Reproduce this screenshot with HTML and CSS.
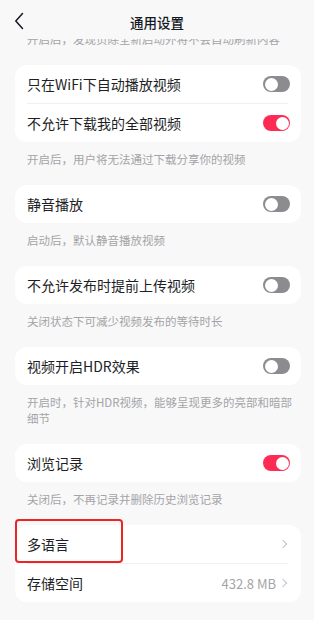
FILE: index.html
```html
<!DOCTYPE html>
<html lang="zh">
<head>
<meta charset="utf-8">
<title>通用设置</title>
<link rel="stylesheet" href="styles.css">
</head>
<body>
<div class="page">
  <div class="header">
    <svg class="back" width="10" height="18" viewBox="0 0 10 18"><path d="M8.5 1.5 L1.8 9 L8.5 16.5" fill="none" stroke="#161823" stroke-width="1.5" stroke-linecap="round" stroke-linejoin="round"/></svg>
    <div class="title">通用设置</div>
  </div>
  <div class="content">
    <div class="desc desc-first">开启后，发现页除全新启动外将不会自动刷新内容</div>
    <div class="card">
      <div class="row"><span class="label">只在WiFi下自动播放视频</span><span class="toggle"></span></div>
      <div class="row row-sep"><span class="label">不允许下载我的全部视频</span><span class="toggle on"></span></div>
    </div>
    <div class="desc">开启后，用户将无法通过下载分享你的视频</div>
    <div class="card">
      <div class="row"><span class="label">静音播放</span><span class="toggle"></span></div>
    </div>
    <div class="desc">启动后，默认静音播放视频</div>
    <div class="card">
      <div class="row"><span class="label">不允许发布时提前上传视频</span><span class="toggle"></span></div>
    </div>
    <div class="desc">关闭状态下可减少视频发布的等待时长</div>
    <div class="card">
      <div class="row"><span class="label">视频开启HDR效果</span><span class="toggle"></span></div>
    </div>
    <div class="desc">开启时，针对HDR视频，能够呈现更多的亮部和暗部细节</div>
    <div class="card">
      <div class="row"><span class="label">浏览记录</span><span class="toggle on"></span></div>
    </div>
    <div class="desc">关闭后，不再记录并删除历史浏览记录</div>
    <div class="card">
      <div class="row row-mark"><span class="label">多语言</span><span class="chev"></span><span class="mark"></span></div>
      <div class="row row-sep"><span class="label">存储空间</span><span class="value">432.8 MB<span class="chev"></span></span></div>
    </div>
  </div>
</div>
</body>
</html>
```
FILE: styles.css
```css
html { background: #ffffff; }
body {
  margin: 0;
  font-family: "Noto Sans CJK SC", "Noto Sans", sans-serif;
  color: #161823;
}
.page {
  width: 314px;
  height: 620px;
  background: #f8f8f8;
  display: flex;
  flex-direction: column;
  overflow: hidden;
}
.header {
  height: 39px;
  flex: none;
  display: flex;
  align-items: center;
  justify-content: center;
  position: relative;
  background: #f8f8f8;
  z-index: 2;
}
.back {
  position: absolute;
  left: 14px;
  top: 12px;
}
.title {
  font-size: 13.5px;
  font-weight: 500;
  line-height: 20px;
  margin-top: 4px;
}
.content {
  flex: 1;
  overflow: hidden;
}
.desc {
  font-size: 11.5px;
  line-height: 16px;
  color: #a4a4a8;
  padding: 9px 20px 18px 27px;
}
.desc-first {
  margin-top: -17px;
}
.card {
  background: #ffffff;
  border-radius: 12px;
  margin: 0 13px 0 15px;
}
.row {
  height: 38px;
  display: flex;
  align-items: center;
  justify-content: space-between;
  padding: 0 11px 0 12px;
  position: relative;
}
.row-sep::before {
  content: "";
  position: absolute;
  left: 12px;
  right: 13px;
  top: -1px;
  height: 1px;
  background: #f0f0f2;
}
.row-sep { margin-top: 1px; }
.label {
  font-size: 14px;
  line-height: 20px;
  color: #1d1e26;
}
.toggle {
  width: 27px;
  height: 16px;
  border-radius: 8px;
  background: #8b8b90;
  position: relative;
}
.toggle::after {
  content: "";
  position: absolute;
  top: 1.5px;
  left: 1.5px;
  width: 13px;
  height: 13px;
  border-radius: 50%;
  background: #ffffff;
}
.toggle.on { background: #fe2c55; }
.toggle.on::after { left: 12.5px; }
.value {
  font-size: 13px;
  color: #a4a4a8;
  display: flex;
  align-items: center;
  gap: 4px;
}
.chev {
  width: 5px;
  height: 5px;
  border-right: 1.2px solid #c4c4c8;
  border-top: 1.2px solid #c4c4c8;
  transform: rotate(45deg);
  margin-right: 4px;
}
.mark {
  position: absolute;
  left: 0;
  top: -6px;
  width: 104px;
  height: 40px;
  border: 2px solid #ee2424;
  border-radius: 4px;
}
```
